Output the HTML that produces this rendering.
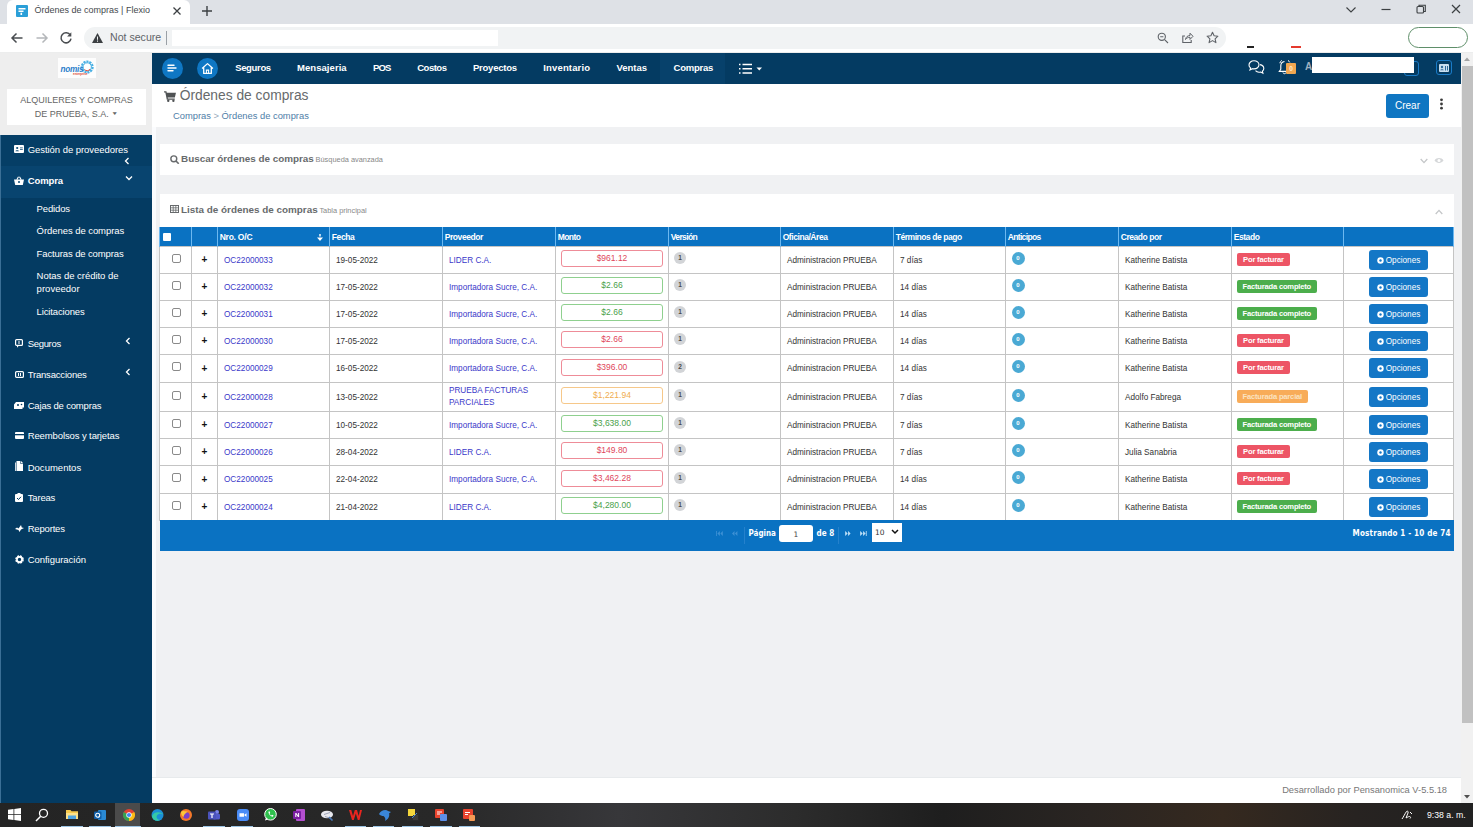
<!DOCTYPE html>
<html lang="es">
<head>
<meta charset="utf-8">
<title>Órdenes de compras | Flexio</title>
<style>
*{box-sizing:border-box;margin:0;padding:0}
html,body{width:1473px;height:827px;overflow:hidden;background:#f0f1f3;font-family:"Liberation Sans",sans-serif;}
body{position:relative}
.abs{position:absolute}
svg{display:block}
/* browser chrome */
#tabbar{position:absolute;left:0;top:0;width:1473px;height:24px;background:#dee1e6}
#tab{position:absolute;left:7px;top:0;width:183px;height:24px;background:#fff;border-radius:6px 6px 0 0}
#tab .t{position:absolute;left:27.500px;top:5px;font-size:9px;color:#45494d;white-space:nowrap}
#toolbar{position:absolute;left:0;top:24px;width:1473px;height:29px;background:#fff;border-bottom:1px solid #eceded;z-index:5}
#omni{position:absolute;left:84px;top:3px;width:1142px;height:22px;border-radius:11px;background:#f1f3f4}
#omni .ns{position:absolute;left:26px;top:4px;font-size:10.600px;color:#5f6368;white-space:nowrap}
/* app */
#side{position:absolute;left:0;top:52px;width:152px;height:751px;background:#043b62}
#sidetop{position:absolute;left:0;top:0;width:152px;height:83px;background:#eeeeee}
#company{position:absolute;left:7px;top:37px;width:139px;height:36px;background:#fff;text-align:center;font-size:9px;line-height:14px;color:#666;padding-top:4px}
#nav{position:absolute;left:152px;top:52px;width:1309px;height:32px;background:#043b62}
#nav .mi{position:absolute;top:10px;font-size:9.5px;font-weight:bold;color:#fff;white-space:nowrap}
.circ{position:absolute;top:6px;width:21px;height:21px;border-radius:50%;background:#0f77c4}
#head{position:absolute;left:152px;top:84px;width:1309px;height:43px;background:#fff}
#head h1{position:absolute;left:27.700px;top:4px;font-size:13.8px;font-weight:normal;color:#676a6c;white-space:nowrap}
#head .bc{position:absolute;left:21px;top:27px;font-size:9.35px;color:#4f7ea8;white-space:nowrap}
#crear{position:absolute;left:1386px;top:94px;width:43px;height:24px;background:#0f76c2;border-radius:3px;color:#fff;font-size:10px;text-align:center;line-height:23px}
.panel{position:absolute;left:160px;width:1294px;background:#fff}
.ptitle{position:absolute;font-size:9.900px;font-weight:bold;color:#676a6c;white-space:nowrap}
.ptitle small{font-size:7.400px;font-weight:normal;color:#888;margin-left:-1px}
#sidemenu .it{position:absolute;left:27.7px;font-size:9.5px;color:#fff;white-space:nowrap}
#sidemenu .sub{position:absolute;left:36.6px;font-size:9.5px;color:#fff;white-space:nowrap;line-height:12.5px}
#sidemenu svg{position:absolute;left:14px}
/* table */
#grid{position:absolute;left:159px;top:227px;width:1294px;border-collapse:collapse;table-layout:fixed;font-size:8.2px;color:#333}
#grid th{background:#0a72c2;color:#fff;font-size:8.5px;text-align:left;height:19px;padding:1px 0 0 1.7px;border-left:1px solid #6cb8f0;border-right:1px solid #6cb8f0;font-weight:bold;letter-spacing:-0.3px;white-space:nowrap}
#grid td{background:#fff;border:1px solid #c4c4c4;padding:1px 0 0 6px;vertical-align:middle;white-space:nowrap}

#grid td.c0{padding:0}
#grid td.c1{padding:0}
#grid td.cm{padding-left:5px}
#grid td.wrap{white-space:normal;line-height:12px}
#grid td a{color:#3b38c9;text-decoration:none}
.amt{display:block;width:102px;height:17px;margin:0 0 3px 0;border:1px solid;border-radius:3px;text-align:center;line-height:14px;font-size:8.5px;background:#fff}
.red{border-color:#ee8c98;color:#e0475c}
.grn{border-color:#8fd08f;color:#4aa14a}
.org{border-color:#f6c88a;color:#f0ad4e}
.ver{display:inline-block;width:12px;height:12px;border-radius:50%;background:#d2d4d7;color:#4a4a4a;font-size:6.5px;font-weight:bold;text-align:center;line-height:12px;margin:0 0 4px -1px}
.ant{display:inline-block;width:13px;height:13px;border-radius:50%;background:#4aa9d4;color:#fff;font-size:6px;font-weight:bold;text-align:center;line-height:13px;margin:0 0 4px -0.500px}
.lab{display:inline-block;height:13px;line-height:13px;padding:0 5.500px;border-radius:2px;color:#fff;font-size:7.600px;font-weight:bold;letter-spacing:-0.2px;margin-left:-1px;position:relative;top:-1px}
.lr{background:#ed5565;padding:0 6.100px}.lg{background:#4cae4c}.lo{background:#f8ac59;color:#fbe3c0}
.opc{display:block;width:59px;height:20px;margin:0 0 0 25px;background:#1477c6;border-radius:3px;color:#fff;font-size:8.200px;text-align:center;line-height:22.500px}
.opc .g{display:inline-block;vertical-align:-1px;margin-right:2px}
.cb{display:block;width:9px;height:9px;border:1px solid #8a8a8a;border-radius:2px;background:#fff;margin:0 0 3px 12px}
.plus{font-size:10px;font-weight:bold;color:#111;display:block;text-align:center;padding-right:0}
#pager{position:absolute;left:160px;top:520px;width:1294px;height:31px;background:#0a72c2;color:#fff;font-size:8px;font-weight:bold;font-family:"DejaVu Sans Condensed","DejaVu Sans",sans-serif}
#footer{position:absolute;left:152px;top:777px;width:1309px;height:26px;background:#fff;border-top:1px solid #e7eaec}
#footer span{position:absolute;right:14px;top:7px;font-size:9.300px;color:#777}
#scroll{position:absolute;left:1461px;top:52px;width:12px;height:751px;background:#f1f1f1}
#scroll i{position:absolute;left:1px;top:14px;width:11px;height:657px;background:#c1c1c1}
#taskbar{position:absolute;left:0;top:803px;width:1473px;height:24px;background:linear-gradient(90deg,#242424 0%,#282828 30%,#37373a 42%,#2c2c2c 54%,#1e1e1e 64%,#2a2522 74%,#35291f 83%,#272321 92%,#212121 100%)}
</style>
<style id="fitcss">
#n1{letter-spacing:-0.345px}
#n2{letter-spacing:0.057px}
#n3{letter-spacing:-0.754px}
#n4{letter-spacing:-0.484px}
#n5{letter-spacing:-0.215px}
#n6{letter-spacing:0.149px}
#n7{letter-spacing:-0.007px}
#n8{letter-spacing:-0.227px}
#h1{letter-spacing:-0.235px}
#h2{letter-spacing:-0.356px}
#h3{letter-spacing:-0.416px}
#h4{letter-spacing:-0.580px}
#h5{letter-spacing:-0.616px}
#h6{letter-spacing:-0.440px}
#h7{letter-spacing:-0.450px}
#h8{letter-spacing:-0.648px}
#h9{letter-spacing:-0.444px}
#h10{letter-spacing:-0.441px}
#s1{letter-spacing:-0.050px}
#s2{letter-spacing:-0.101px}
#s3{letter-spacing:-0.149px}
#s4{letter-spacing:-0.062px}
#s5{letter-spacing:-0.118px}
#s15{letter-spacing:-0.026px}
#s16{letter-spacing:0.024px}
#s6{letter-spacing:-0.137px}
#s7{letter-spacing:-0.313px}
#s8{letter-spacing:-0.188px}
#s9{letter-spacing:-0.185px}
#s10{letter-spacing:-0.109px}
#s11{letter-spacing:0.016px}
#s12{letter-spacing:-0.169px}
#s13{letter-spacing:-0.183px}
#s14{letter-spacing:-0.033px}
#p1{letter-spacing:-0.019px}
#p2{letter-spacing:0.038px}
#p3{letter-spacing:0.180px}
</style>
</head>
<body>
<div id="tabbar">
  <div id="tab">
    <svg class="abs" style="left:9px;top:5px" width="12" height="12" viewBox="0 0 12 12"><rect width="12" height="12" rx="1" fill="#2a9fd8"/><path d="M2.5 3h7v1.6h-7zM2.5 5.6h5v1.4h-5zM4.5 7.8h1.6v2.2h-1.6z" fill="#fff"/></svg>
    <span class="t">Órdenes de compras | Flexio</span>
    <svg class="abs" style="left:165px;top:6px" width="10" height="10" viewBox="0 0 10 10"><path d="M1.5 1.5l7 7M8.5 1.5l-7 7" stroke="#3c4043" stroke-width="1.3" fill="none"/></svg>
  </div>
  <svg class="abs" style="left:201px;top:5px" width="12" height="12" viewBox="0 0 12 12"><path d="M6 1v10M1 6h10" stroke="#3c4043" stroke-width="1.4" fill="none"/></svg>
  <svg class="abs" style="left:1345px;top:5px" width="12" height="10" viewBox="0 0 12 10"><path d="M1.5 2.5l4.5 4.5 4.5-4.5" stroke="#3c4043" stroke-width="1.1" fill="none"/></svg>
  <svg class="abs" style="left:1380px;top:4px" width="12" height="12" viewBox="0 0 12 12"><path d="M1.5 5.5h9" stroke="#3c4043" stroke-width="1.2"/></svg>
  <svg class="abs" style="left:1415px;top:3px" width="12" height="12" viewBox="0 0 12 12"><rect x="2" y="3.5" width="6.5" height="6.5" rx="1" stroke="#3c4043" stroke-width="1.1" fill="none"/><path d="M4 3.5v-1.3h6.3v6.3h-1.6" stroke="#3c4043" stroke-width="1.1" fill="none"/></svg>
  <svg class="abs" style="left:1450px;top:3px" width="12" height="12" viewBox="0 0 12 12"><path d="M2 2l8 8M10 2l-8 8" stroke="#3c4043" stroke-width="1.2" fill="none"/></svg>
</div>
<div id="toolbar">
  <svg class="abs" style="left:10px;top:7px" width="14" height="14" viewBox="0 0 14 14"><path d="M12.5 7h-10M6.5 2.5l-4.5 4.5 4.5 4.5" stroke="#4a4d51" stroke-width="1.5" fill="none"/></svg>
  <svg class="abs" style="left:35px;top:7px" width="14" height="14" viewBox="0 0 14 14"><path d="M1.5 7h10M7.5 2.5l4.5 4.5-4.5 4.5" stroke="#b4b7ba" stroke-width="1.5" fill="none"/></svg>
  <svg class="abs" style="left:59px;top:7px" width="14" height="14" viewBox="0 0 14 14"><path d="M11.3 4.2A5 5 0 1 0 12 7.6" stroke="#4a4d51" stroke-width="1.5" fill="none"/><path d="M12.3 1.3v4.2h-4.2z" fill="#4a4d51"/></svg>
  <div id="omni">
    <svg class="abs" style="left:8px;top:6px" width="11" height="10" viewBox="0 0 11 10"><path d="M5.5 0L11 10H0z" fill="#3c4043"/><path d="M5 3.6h1v3.2h-1zM5 7.6h1v1.1h-1z" fill="#f1f3f4"/></svg>
    <span class="ns">Not secure</span>
    <span class="abs" style="left:82px;top:4px;width:1px;height:14px;background:#9aa0a6"></span>
    <span class="abs" style="left:88px;top:3px;width:326px;height:16px;background:#fff"></span>
    <svg class="abs" style="left:1073px;top:5px" width="12" height="12" viewBox="0 0 12 12"><circle cx="4.8" cy="4.8" r="3.6" stroke="#5f6368" stroke-width="1.1" fill="none"/><path d="M7.6 7.6l3.4 3.4M3.2 4.8h3.2" stroke="#5f6368" stroke-width="1.1"/></svg>
    <svg class="abs" style="left:1097px;top:4px" width="13" height="13" viewBox="0 0 13 13"><path d="M4 5H1.8v6.5h8.4V9" stroke="#5f6368" stroke-width="1.1" fill="none"/><path d="M4.5 8.5c.4-2.6 2-3.8 4.5-4V2.2l3 3.1-3 3.1V6.3C7 6.300 5.500 7 4.500 8.500z" stroke="#5f6368" stroke-width="1" fill="none"/></svg>
    <svg class="abs" style="left:1122px;top:4px" width="13" height="13" viewBox="0 0 13 13"><path d="M6.5 1.3l1.6 3.5 3.8.4-2.800 2.600.8 3.800-3.400-2-3.400 2 .8-3.800L1.100 5.200l3.800-.4z" stroke="#5f6368" stroke-width="1.1" fill="none" stroke-linejoin="round"/></svg>
  </div>
  <span class="abs" style="left:1247px;top:22px;width:7px;height:2px;background:#222"></span>
  <span class="abs" style="left:1291px;top:22px;width:10px;height:2px;background:#e53a2e"></span>
  <span class="abs" style="left:1408px;top:3px;width:60px;height:21px;border:1px solid #5f8f6a;border-radius:11px;background:#fff"></span>
</div>

<div id="side">
  <div id="sidetop">
    <div class="abs" style="left:57.500px;top:6px;width:38px;height:20px;background:#fdfdfd"></div>
    <svg class="abs" style="left:57.500px;top:6px" width="38" height="20" viewBox="0 0 38 20"><circle cx="29.200" cy="9" r="5.400" stroke="#49b0e4" stroke-width="2.200" fill="none" stroke-dasharray="2.100 .9"/><circle cx="29.200" cy="9" r="4.200" stroke="#49b0e4" stroke-width="1" fill="#fff"/><path d="M26.500 11.500a3.600 3.600 0 0 0 5.600-.4" stroke="#e8523f" stroke-width="1" fill="none"/><rect x="2" y="6" width="24" height="7.500" fill="#fdfdfd" opacity=".0"/><text x="2.600" y="13.500" font-family="Liberation Sans, sans-serif" font-size="8.200" font-weight="bold" font-style="italic" fill="#2c7fcb" letter-spacing="-.3">nomis</text><text x="15" y="17" font-family="Liberation Sans, sans-serif" font-size="3" font-weight="bold" fill="#e0452f">enterprise</text></svg>
    <div id="company">ALQUILERES Y COMPRAS<br>DE PRUEBA, S.A. <span style="font-size:7px;vertical-align:1px;display:inline-block;transform:scaleY(.7)">▼</span></div>
  </div>
  <div class="abs" style="left:0;top:83px;width:152px;height:31px;background:#053e66"></div>
  <div class="abs" style="left:0;top:114px;width:152px;height:32px;background:#08446f"></div>
  <div class="abs" style="left:0;top:83px;width:1px;height:668px;background:#3b6f96"></div>
  <div id="sidemenu">
    <svg style="top:93px" width="10" height="8" viewBox="0 0 10 8"><rect width="10" height="8" rx="1" fill="#fff"/><circle cx="3.200" cy="3" r="1.1" fill="#0a4873"/><path d="M1.500 6.200c0-1.400 3.400-1.400 3.400 0zM6 2.500h2.800v.8H6zM6 4.300h2.800v.8H6z" fill="#0a4873"/></svg>
    <span class="it" id="s1" style="top:92px">Gestión de proveedores</span>
    <svg style="left:124px;top:105px" width="6" height="8" viewBox="0 0 6 8"><path d="M4.500 1L1.500 4l3 3" stroke="#fff" stroke-width="1.3" fill="none"/></svg>
    <svg style="top:124px" width="10" height="9" viewBox="0 0 10 9"><path d="M0 3.500h10l-1.200 5.500H1.200z" fill="#fff"/><path d="M2.800 3.800L4.500.8M7.200 3.800L5.500.8" stroke="#fff" stroke-width="1.100" fill="none"/><circle cx="5" cy="6" r="1" fill="#0a4873"/></svg>
    <span class="it" id="s2" style="top:123px;font-weight:bold">Compra</span>
    <svg style="left:125px;top:123px" width="8" height="6" viewBox="0 0 8 6"><path d="M1 1.500l3 3 3-3" stroke="#fff" stroke-width="1.300" fill="none"/></svg>
    <span class="sub" id="s3" style="top:151px">Pedidos</span>
    <span class="sub" id="s4" style="top:173px">Órdenes de compras</span>
    <span class="sub" id="s5" style="top:196px">Facturas de compras</span>
    <span class="sub" style="top:218px"><span id="s15">Notas de crédito de</span><br><span id="s16">proveedor</span></span>
    <span class="sub" id="s6" style="top:254px">Licitaciones</span>
    <svg style="left:15px;top:287px" width="8" height="9" viewBox="0 0 8 9"><rect x=".6" y=".6" width="6.800" height="5.800" rx="1" stroke="#fff" stroke-width="1.200" fill="none"/><path d="M2 6.500v2.200l2-2.200zM3.500 2h1v3h-1z" fill="#fff"/></svg>
    <span class="it" id="s7" style="top:286px">Seguros</span>
    <svg style="left:125px;top:285px" width="6" height="8" viewBox="0 0 6 8"><path d="M4.500 1L1.500 4l3 3" stroke="#fff" stroke-width="1.300" fill="none"/></svg>
    <svg style="left:15px;top:319px" width="9" height="7" viewBox="0 0 9 7"><rect x=".6" y=".6" width="7.800" height="5.800" rx="1" stroke="#fff" stroke-width="1.200" fill="none"/><path d="M3 2h1v3H3zM5 2h1v3H5z" fill="#fff"/></svg>
    <span class="it" id="s8" style="top:317px">Transacciones</span>
    <svg style="left:125px;top:316px" width="6" height="8" viewBox="0 0 6 8"><path d="M4.500 1L1.500 4l3 3" stroke="#fff" stroke-width="1.300" fill="none"/></svg>
    <svg style="top:350px" width="10" height="7" viewBox="0 0 10 7"><path d="M2 0h8v5.500H8.500V7H0V2.500z" fill="#fff"/><circle cx="4" cy="3" r="1" fill="#043b62"/><circle cx="7.500" cy="2.500" r=".8" fill="#043b62"/></svg>
    <span class="it" id="s9" style="top:348px">Cajas de compras</span>
    <svg style="left:15px;top:380px" width="9" height="7" viewBox="0 0 9 7"><rect width="9" height="7" rx="1" fill="#fff"/><path d="M0 2h9v1.300H0z" fill="#043b62"/></svg>
    <span class="it" id="s10" style="top:378px">Reembolsos y tarjetas</span>
    <svg style="left:15px;top:409px" width="8" height="10" viewBox="0 0 8 10"><path d="M1.500 0H6l2 2v8H1.500z" fill="#fff"/><path d="M0 1.500h1v8.500H0z" fill="#cfd9e2"/><path d="M5.500 0v2.500H8" stroke="#043b62" stroke-width=".6" fill="none"/></svg>
    <span class="it" id="s11" style="top:409.500px">Documentos</span>
    <svg style="left:15px;top:441px" width="8" height="9" viewBox="0 0 8 9"><rect y="1" width="8" height="8" rx="1" fill="#fff"/><rect x="2.500" width="3" height="2" fill="#fff"/><path d="M2 5l1.500 1.500L6 3.800" stroke="#043b62" stroke-width="1" fill="none"/></svg>
    <span class="it" id="s12" style="top:440px">Tareas</span>
    <svg style="left:15px;top:473px" width="9" height="7" viewBox="0 0 9 7"><path d="M0 4l2-1.500 1.500 1L6 0l.8 2.500L9 3 6 4.500 4.500 7l-1-2z" fill="#fff"/></svg>
    <span class="it" id="s13" style="top:471px">Reportes</span>
    <svg style="left:15px;top:503px" width="9" height="9" viewBox="0 0 9 9"><circle cx="4.500" cy="4.500" r="3" fill="none" stroke="#fff" stroke-width="2.600" stroke-dasharray="1.600 .76"/><circle cx="4.500" cy="4.500" r="2.600" fill="none" stroke="#fff" stroke-width="1.600"/></svg>
    <span class="it" id="s14" style="top:502px">Configuración</span>
  </div>
</div>

<div id="nav">
  <div class="abs" style="left:508px;top:0;width:65px;height:32px;background:#07416b"></div>
  <div class="circ" style="left:10px"><svg class="abs" style="left:5px;top:5px" width="10" height="10" viewBox="0 0 10 10"><path d="M1 2.200h6M1 5h8M1 7.800h5" stroke="#fff" stroke-width="1.400" stroke-linecap="round"/></svg></div>
  <div class="circ" style="left:45px"><svg class="abs" style="left:4px;top:4px" width="13" height="13" viewBox="0 0 12 12"><path d="M1 6l5-4.500L11 6M2.500 5v5.500h7V5" stroke="#fff" stroke-width="1.200" fill="none" stroke-linejoin="round"/><path d="M5 10.500V7.500h2v3" stroke="#fff" stroke-width="1" fill="none"/></svg></div>
  <span class="mi" id="n1" style="left:83.2px">Seguros</span>
  <span class="mi" id="n2" style="left:145.0px">Mensajeria</span>
  <span class="mi" id="n3" style="left:220.9px">POS</span>
  <span class="mi" id="n4" style="left:265.2px">Costos</span>
  <span class="mi" id="n5" style="left:320.9px">Proyectos</span>
  <span class="mi" id="n6" style="left:391.3px">Inventario</span>
  <span class="mi" id="n7" style="left:464.4px">Ventas</span>
  <span class="mi" id="n8" style="left:521.5px">Compras</span>
  <svg class="abs" style="left:587px;top:11px" width="24" height="12" viewBox="0 0 24 12"><path d="M0 1.600h1.500M3.500 1.600h9.500M0 5.800h1.500M3.500 5.800h9.500M0 10h1.500M3.500 10h9.500" stroke="#fff" stroke-width="1.500"/><path d="M17.500 4.500h5.500l-2.750 3z" fill="#fff"/></svg>
  <svg class="abs" style="left:1096px;top:8px" width="17" height="15" viewBox="0 0 17 15"><path d="M6 .8c-2.800 0-5 1.800-5 4.100 0 1.200.6 2.300 1.600 3L2 10l2.400-1.300c.5.100 1 .2 1.600.2 2.800 0 5-1.800 5-4.100S8.800.8 6 .8z" stroke="#fff" stroke-width="1.100" fill="none"/><path d="M12 4.600c2 .4 3.800 1.800 3.800 3.800 0 1-.5 2-1.400 2.700l.5 2.100-2.200-1.200c-1.800.5-4 0-5.200-1.300" stroke="#fff" stroke-width="1.100" fill="none"/></svg>
  <svg class="abs" style="left:1126px;top:7px" width="14" height="16" viewBox="0 0 14 16"><path d="M6.500 2.500c-2.400.3-3.700 2-3.700 4.300v3.400L1.300 12.400h10.400" stroke="#fff" stroke-width="1.100" fill="none"/><path d="M1.800 4.200C2 3 2.800 2 3.800 1.400M10 1.400c.8.500 1.400 1.200 1.800 2" stroke="#fff" stroke-width="1" fill="none"/><path d="M5 13.500c.3 1.600 2.700 1.600 3 0" stroke="#fff" stroke-width="1" fill="none"/></svg>
  <span class="abs" style="left:1134px;top:11px;width:10px;height:11px;background:#f1a751;border-radius:1px;color:#fde9cf;font-size:6.500px;font-weight:bold;text-align:center;line-height:11px">0</span>
  <span class="abs" style="left:1153px;top:9px;color:#9fb0c0;font-size:10px;font-weight:bold">A</span>
  <span class="abs" style="left:1252px;top:9px;width:15px;height:15px;border:1.500px solid #1a7bc7;border-radius:3px"></span>
  <span class="abs" style="left:1160px;top:5px;width:102px;height:16px;background:#fff"></span>
  <span class="abs" style="left:1284px;top:8px;width:16px;height:15px;border:1.500px solid #1a7bc7;border-radius:3px"></span>
  <svg class="abs" style="left:1287px;top:12px" width="10" height="8" viewBox="0 0 10 8"><rect width="10" height="8" rx="1" fill="#c9dff0"/><circle cx="3" cy="3" r="1.200" fill="#2d6a9a"/><path d="M1.200 6.300c0-1.500 3.600-1.500 3.600 0zM6 2h1v4.500H6zM8 2h1v4.500H8z" fill="#2d6a9a"/></svg>
</div>

<div class="abs" style="left:152px;top:127px;width:3.500px;height:650px;background:#fbfcfe"></div>
<div id="head">
  <svg class="abs" style="left:11.500px;top:6.500px" width="12" height="11" viewBox="0 0 13 12"><path d="M0 .3h2.600l.4 1.500H13l-1.200 5.400H4l.2 1h7.500v1.300H3L1.400 1.600H0z" fill="#4f5254"/><circle cx="4.600" cy="10.700" r="1.300" fill="#4f5254"/><circle cx="10.200" cy="10.700" r="1.300" fill="#4f5254"/></svg>
  <h1>Órdenes de compras</h1>
  <div class="bc">Compras <span style="color:#9ab">&gt;</span> Órdenes de compras</div>
</div>
<div id="crear">Crear</div>
<svg class="abs" style="left:1439px;top:98px" width="5" height="12" viewBox="0 0 5 12"><circle cx="2.500" cy="1.800" r="1.400" fill="#3a3a3a"/><circle cx="2.500" cy="6" r="1.400" fill="#3a3a3a"/><circle cx="2.500" cy="10.200" r="1.400" fill="#3a3a3a"/></svg>

<div class="panel" style="top:144px;height:31px">
  <svg class="abs" style="left:10px;top:10.500px" width="9.500" height="9.500" viewBox="0 0 10 10"><circle cx="4" cy="4" r="3.100" stroke="#676a6c" stroke-width="1.500" fill="none"/><path d="M6.300 6.300l2.900 2.900" stroke="#676a6c" stroke-width="1.700"/></svg>
  <span class="ptitle" style="left:21px;top:9px">Buscar órdenes de compras <small>Búsqueda avanzada</small></span>
  <svg class="abs" style="left:1260px;top:14px" width="8" height="6" viewBox="0 0 8 6"><path d="M.700 1l3.300 3.600L7.300 1" stroke="#c4c6c8" stroke-width="1.300" fill="none"/></svg>
  <svg class="abs" style="left:1274px;top:13px" width="10" height="7" viewBox="0 0 10 7"><path d="M.5 3.500C2.500.300 7.500.300 9.500 3.500 7.500 6.700 2.500 6.700.5 3.500z" fill="#d5d7d9"/><circle cx="5" cy="3.500" r="1.500" fill="#fff"/></svg>
</div>
<div class="panel" style="top:194px;height:34px">
  <svg class="abs" style="left:10px;top:11px" width="9" height="8" viewBox="0 0 9 8"><rect x=".5" y=".5" width="8" height="7" fill="none" stroke="#676a6c" stroke-width="1"/><path d="M.5 2.800h8M.5 5.200h8M3.200.5v7M5.800.5v7" stroke="#676a6c" stroke-width=".8"/></svg>
  <span class="ptitle" style="left:21px;top:10px">Lista de órdenes de compras <small>Tabla principal</small></span>
  <svg class="abs" style="left:1275px;top:15px" width="8" height="6" viewBox="0 0 8 6"><path d="M.700 5l3.300-3.600L7.300 5" stroke="#c4c6c8" stroke-width="1.300" fill="none"/></svg>
</div>

<table id="grid">
<colgroup><col style="width:32px"><col style="width:26px"><col style="width:112px"><col style="width:113px"><col style="width:113px"><col style="width:113px"><col style="width:112px"><col style="width:113px"><col style="width:112px"><col style="width:113px"><col style="width:113px"><col style="width:112px"><col style="width:110px"></colgroup>
<tr><th><i style="display:block;width:8px;height:8px;background:#fff;border-radius:1px;margin-left:1px"></i></th><th></th><th><span id="h1">Nro. O/C</span><svg style="float:right;margin:2px 6px 0 0" width="6" height="8" viewBox="0 0 6 8"><path d="M2.300 0h1.400v2.500H2.300zM0 3.500h6L3 7z" fill="#fff"/></svg></th><th><span id="h2">Fecha</span></th><th><span id="h3">Proveedor</span></th><th><span id="h4">Monto</span></th><th><span id="h5">Versión</span></th><th><span id="h6">Oficina/Área</span></th><th><span id="h7">Términos de pago</span></th><th><span id="h8">Anticipos</span></th><th><span id="h9">Creado por</span></th><th><span id="h10">Estado</span></th><th></th></tr>
<tr style="height:27px"><td class="c0"><i class="cb"></i></td><td class="c1"><span class="plus">+</span></td><td><a>OC22000033</a></td><td>19-05-2022</td><td><a>LIDER C.A.</a></td><td class="cm"><span class="amt red">$961.12</span></td><td><span class="ver">1</span></td><td>Administracion PRUEBA</td><td>7 días</td><td><span class="ant">0</span></td><td>Katherine Batista</td><td><span class="lab lr">Por facturar</span></td><td class="c0"><span class="opc"><svg class="g" width="7" height="7" viewBox="0 0 10 10"><circle cx="5" cy="5" r="4.6" fill="#fff"/><circle cx="5" cy="5" r="1.7" fill="#1477c6"/></svg>Opciones</span></td></tr>
<tr style="height:27px"><td class="c0"><i class="cb"></i></td><td class="c1"><span class="plus">+</span></td><td><a>OC22000032</a></td><td>17-05-2022</td><td><a>Importadora Sucre, C.A.</a></td><td class="cm"><span class="amt grn">$2.66</span></td><td><span class="ver">1</span></td><td>Administracion PRUEBA</td><td>14 días</td><td><span class="ant">0</span></td><td>Katherine Batista</td><td><span class="lab lg">Facturada completo</span></td><td class="c0"><span class="opc"><svg class="g" width="7" height="7" viewBox="0 0 10 10"><circle cx="5" cy="5" r="4.6" fill="#fff"/><circle cx="5" cy="5" r="1.7" fill="#1477c6"/></svg>Opciones</span></td></tr>
<tr style="height:27px"><td class="c0"><i class="cb"></i></td><td class="c1"><span class="plus">+</span></td><td><a>OC22000031</a></td><td>17-05-2022</td><td><a>Importadora Sucre, C.A.</a></td><td class="cm"><span class="amt grn">$2.66</span></td><td><span class="ver">1</span></td><td>Administracion PRUEBA</td><td>14 días</td><td><span class="ant">0</span></td><td>Katherine Batista</td><td><span class="lab lg">Facturada completo</span></td><td class="c0"><span class="opc"><svg class="g" width="7" height="7" viewBox="0 0 10 10"><circle cx="5" cy="5" r="4.6" fill="#fff"/><circle cx="5" cy="5" r="1.7" fill="#1477c6"/></svg>Opciones</span></td></tr>
<tr style="height:27px"><td class="c0"><i class="cb"></i></td><td class="c1"><span class="plus">+</span></td><td><a>OC22000030</a></td><td>17-05-2022</td><td><a>Importadora Sucre, C.A.</a></td><td class="cm"><span class="amt red">$2.66</span></td><td><span class="ver">1</span></td><td>Administracion PRUEBA</td><td>14 días</td><td><span class="ant">0</span></td><td>Katherine Batista</td><td><span class="lab lr">Por facturar</span></td><td class="c0"><span class="opc"><svg class="g" width="7" height="7" viewBox="0 0 10 10"><circle cx="5" cy="5" r="4.6" fill="#fff"/><circle cx="5" cy="5" r="1.7" fill="#1477c6"/></svg>Opciones</span></td></tr>
<tr style="height:28px"><td class="c0"><i class="cb"></i></td><td class="c1"><span class="plus">+</span></td><td><a>OC22000029</a></td><td>16-05-2022</td><td><a>Importadora Sucre, C.A.</a></td><td class="cm"><span class="amt red">$396.00</span></td><td><span class="ver">2</span></td><td>Administracion PRUEBA</td><td>14 días</td><td><span class="ant">0</span></td><td>Katherine Batista</td><td><span class="lab lr">Por facturar</span></td><td class="c0"><span class="opc"><svg class="g" width="7" height="7" viewBox="0 0 10 10"><circle cx="5" cy="5" r="4.6" fill="#fff"/><circle cx="5" cy="5" r="1.7" fill="#1477c6"/></svg>Opciones</span></td></tr>
<tr class="tall" style="height:29px"><td class="c0"><i class="cb"></i></td><td class="c1"><span class="plus">+</span></td><td><a>OC22000028</a></td><td>13-05-2022</td><td class="wrap"><a>PRUEBA FACTURAS PARCIALES</a></td><td class="cm"><span class="amt org">$1,221.94</span></td><td><span class="ver">1</span></td><td>Administracion PRUEBA</td><td>7 días</td><td><span class="ant">0</span></td><td>Adolfo Fabrega</td><td><span class="lab lo">Facturada parcial</span></td><td class="c0"><span class="opc"><svg class="g" width="7" height="7" viewBox="0 0 10 10"><circle cx="5" cy="5" r="4.6" fill="#fff"/><circle cx="5" cy="5" r="1.7" fill="#1477c6"/></svg>Opciones</span></td></tr>
<tr style="height:27px"><td class="c0"><i class="cb"></i></td><td class="c1"><span class="plus">+</span></td><td><a>OC22000027</a></td><td>10-05-2022</td><td><a>Importadora Sucre, C.A.</a></td><td class="cm"><span class="amt grn">$3,638.00</span></td><td><span class="ver">1</span></td><td>Administracion PRUEBA</td><td>7 días</td><td><span class="ant">0</span></td><td>Katherine Batista</td><td><span class="lab lg">Facturada completo</span></td><td class="c0"><span class="opc"><svg class="g" width="7" height="7" viewBox="0 0 10 10"><circle cx="5" cy="5" r="4.6" fill="#fff"/><circle cx="5" cy="5" r="1.7" fill="#1477c6"/></svg>Opciones</span></td></tr>
<tr style="height:27px"><td class="c0"><i class="cb"></i></td><td class="c1"><span class="plus">+</span></td><td><a>OC22000026</a></td><td>28-04-2022</td><td><a>LIDER C.A.</a></td><td class="cm"><span class="amt red">$149.80</span></td><td><span class="ver">1</span></td><td>Administracion PRUEBA</td><td>7 días</td><td><span class="ant">0</span></td><td>Julia Sanabria</td><td><span class="lab lr">Por facturar</span></td><td class="c0"><span class="opc"><svg class="g" width="7" height="7" viewBox="0 0 10 10"><circle cx="5" cy="5" r="4.6" fill="#fff"/><circle cx="5" cy="5" r="1.7" fill="#1477c6"/></svg>Opciones</span></td></tr>
<tr style="height:28px"><td class="c0"><i class="cb"></i></td><td class="c1"><span class="plus">+</span></td><td><a>OC22000025</a></td><td>22-04-2022</td><td><a>Importadora Sucre, C.A.</a></td><td class="cm"><span class="amt red">$3,462.28</span></td><td><span class="ver">1</span></td><td>Administracion PRUEBA</td><td>14 días</td><td><span class="ant">0</span></td><td>Katherine Batista</td><td><span class="lab lr">Por facturar</span></td><td class="c0"><span class="opc"><svg class="g" width="7" height="7" viewBox="0 0 10 10"><circle cx="5" cy="5" r="4.6" fill="#fff"/><circle cx="5" cy="5" r="1.7" fill="#1477c6"/></svg>Opciones</span></td></tr>
<tr style="height:27px"><td class="c0"><i class="cb"></i></td><td class="c1"><span class="plus">+</span></td><td><a>OC22000024</a></td><td>21-04-2022</td><td><a>LIDER C.A.</a></td><td class="cm"><span class="amt grn">$4,280.00</span></td><td><span class="ver">1</span></td><td>Administracion PRUEBA</td><td>14 días</td><td><span class="ant">0</span></td><td>Katherine Batista</td><td><span class="lab lg">Facturada completo</span></td><td class="c0"><span class="opc"><svg class="g" width="7" height="7" viewBox="0 0 10 10"><circle cx="5" cy="5" r="4.6" fill="#fff"/><circle cx="5" cy="5" r="1.7" fill="#1477c6"/></svg>Opciones</span></td></tr>
</table>

<div id="pager">
  <span class="abs" style="left:584px;top:7px;width:1px;height:17px;background:#2581cc"></span>
  <svg class="abs" style="left:556px;top:11px" width="7" height="5" viewBox="0 0 8 6"><path d="M0 0h1v6H0zM4.500 0v6L1.500 3zM8 0v6L5 3z" fill="#3d90d4"/></svg>
  <svg class="abs" style="left:571px;top:11px" width="7" height="5" viewBox="0 0 8 6"><path d="M4 0v6L1 3zM7.500 0v6L4.500 3z" fill="#3d90d4"/></svg>
  <span class="abs" id="p1" style="left:588.500px;top:8.500px">Página</span>
  <span class="abs" style="left:619px;top:5px;width:34px;height:17px;background:#fff;border-radius:3px;color:#444;font-weight:normal;text-align:center;line-height:19px;font-size:7.500px;font-family:'DejaVu Sans',sans-serif">1</span>
  <span class="abs" id="p2" style="left:656.500px;top:8.500px">de 8</span>
  <span class="abs" style="left:678px;top:7px;width:1px;height:17px;background:#2581cc"></span>
  <svg class="abs" style="left:685px;top:11px" width="7" height="5" viewBox="0 0 8 6"><path d="M0 0v6l3-3zM3.500 0v6l3-3z" fill="#bfe0f7"/></svg>
  <svg class="abs" style="left:700px;top:11px" width="7" height="5" viewBox="0 0 8 6"><path d="M0 0v6l3-3zM3.500 0v6l3-3zM6.800 0h1v6h-1z" fill="#bfe0f7"/></svg>
  <span class="abs" style="left:712px;top:3px;width:30px;height:19px;background:#fff;color:#333;font-weight:normal;line-height:20px;font-size:7.500px;padding-left:3px;font-family:'DejaVu Sans',sans-serif">10<svg class="abs" style="left:19px;top:6px" width="8" height="6" viewBox="0 0 8 6"><path d="M1 1l3 3 3-3" stroke="#111" stroke-width="1.500" fill="none"/></svg></span>
  <span class="abs" id="p3" style="left:1192.600px;top:8.500px;white-space:nowrap">Mostrando 1 - 10 de 74</span>
</div>

<div id="footer"><span>Desarrollado por Pensanomica V-5.5.18</span></div>
<div id="scroll"><i></i>
  <svg class="abs" style="left:3px;top:5px" width="6" height="4" viewBox="0 0 6 4"><path d="M0 4l3-3.500L6 4z" fill="#a3a3a3"/></svg>
  <svg class="abs" style="left:3px;top:743px" width="6" height="4" viewBox="0 0 6 4"><path d="M0 0l3 3.500L6 0z" fill="#505050"/></svg>
</div>
<div id="taskbar">
  <span class="abs" style="left:115px;top:0;width:25px;height:24px;background:#4b4b4b"></span>
  <svg class="abs" style="left:8px;top:5px" width="13" height="13" viewBox="0 0 13 13"><path d="M0 1.800l5.500-.8v5.200H0zM6.300.900L13 0v6.200H6.300zM0 6.900h5.500v5.200L0 11.300zM6.300 6.900H13V13l-6.700-.9z" fill="#fff"/></svg>
  <svg class="abs" style="left:35px;top:5px" width="14" height="14" viewBox="0 0 14 14"><circle cx="8.500" cy="5.300" r="4" stroke="#fff" stroke-width="1.300" fill="none"/><path d="M5.700 8.300L1 13" stroke="#fff" stroke-width="1.500"/></svg>
  <svg class="abs" style="left:66px;top:6px" width="12" height="11" viewBox="0 0 12 11"><path d="M0 1h4.500l1 1.200H12V10H0z" fill="#f5c84c"/><path d="M0 4h12v6H0z" fill="#fbe08a"/><path d="M2 6.500h8V10H2z" fill="#4fa3e0"/></svg>
  <svg class="abs" style="left:94px;top:6px" width="12" height="12" viewBox="0 0 12 12"><rect x="4" y="1" width="8" height="10" rx="1" fill="#2a8ad4"/><rect y="2.500" width="7.500" height="7.500" rx="1" fill="#0f5ea8"/><circle cx="3.700" cy="6.200" r="2" stroke="#fff" stroke-width="1.100" fill="none"/></svg>
  <svg class="abs" style="left:123px;top:6px" width="12" height="12" viewBox="0 0 12 12"><circle cx="6" cy="6" r="6" fill="#e34133"/><path d="M6 6L.8 3A6 6 0 0 0 6 12z" fill="#34a353"/><path d="M6 6v6A6 6 0 0 0 11.200 3z" fill="#f9bc15"/><circle cx="6" cy="6" r="2.700" fill="#fff"/><circle cx="6" cy="6" r="2.100" fill="#4285f4"/></svg>
  <svg class="abs" style="left:151px;top:6px" width="13" height="12" viewBox="0 0 13 12"><circle cx="6.500" cy="6" r="6" fill="#1b8fd6"/><path d="M1 7.500C2 2 11 2 12.300 6c-1-1.500-5-2-6.300.5s1 4.500 3.500 4.300C6 13 1.500 11 1 7.500z" fill="#35c9a5"/></svg>
  <svg class="abs" style="left:180px;top:6px" width="12" height="12" viewBox="0 0 12 12"><circle cx="6" cy="6" r="6" fill="#f5782a"/><circle cx="6.300" cy="6.500" r="3.300" fill="#7c3fc9"/><path d="M1 3C3 1 5 3 8 2.500 6 4 4 5 3.500 8 2 7 1 5 1 3z" fill="#fdc53a"/></svg>
  <svg class="abs" style="left:208px;top:6px" width="12" height="12" viewBox="0 0 12 12"><circle cx="9" cy="3" r="2" fill="#7b83eb"/><rect x="5" y="4.500" width="7" height="6" rx="1.500" fill="#5059c9"/><rect y="2.500" width="8" height="8" rx="1" fill="#4b53bc"/><path d="M2 4.500h4v1H4.600v3.500H3.400V5.500H2z" fill="#fff"/></svg>
  <svg class="abs" style="left:237px;top:6px" width="12" height="12" viewBox="0 0 12 12"><rect width="12" height="12" rx="3" fill="#4a8cf7"/><path d="M2.500 4.200h4.500v3.600H2.500zM7.500 5.500l2-1.300v3.600l-2-1.300z" fill="#fff"/></svg>
  <svg class="abs" style="left:264px;top:5px" width="13" height="13" viewBox="0 0 13 13"><circle cx="6.500" cy="6.300" r="5.800" fill="#2fc14d" stroke="#fff" stroke-width="1"/><path d="M1 12.500l1-3 2 2z" fill="#fff"/><path d="M4.300 3.800c.5 3 2.200 4.600 4.500 5l.8-1.200-1.600-.8-.6.600C6.400 7 5.800 6.200 5.600 5.400l.6-.5-.6-1.700z" fill="#fff"/></svg>
  <svg class="abs" style="left:293px;top:6px" width="12" height="12" viewBox="0 0 12 12"><rect x="3" width="9" height="12" rx="1" fill="#b54fd0"/><rect y="2" width="8" height="8" rx="1" fill="#7a1fa2"/><path d="M2.300 8V4h1l1.800 2.500V4h1v4H5L3.300 5.600V8z" fill="#fff"/></svg>
  <svg class="abs" style="left:321px;top:7px" width="13" height="11" viewBox="0 0 13 11"><ellipse cx="6" cy="4.500" rx="6" ry="3.800" fill="#e8e8ee"/><path d="M3 4.500l6-2M4 6.500l6 2" stroke="#8a90a8" stroke-width=".8"/><path d="M8 7l3.500 3.500" stroke="#4a78b8" stroke-width="1.600"/></svg>
  <svg class="abs" style="left:349px;top:7px" width="13" height="10" viewBox="0 0 13 10"><path d="M0 0h2.300l1.700 6 1.800-6H8L9.700 6 11 0h2l-2.500 10H8.800L6.800 3.500 4.800 10H3z" fill="#e8251f"/></svg>
  <svg class="abs" style="left:379px;top:6px" width="12" height="12" viewBox="0 0 12 12"><path d="M0 5C2 1 7 0 9 2l3 1-2 1.500c1 3-1 6-4 7.500 1-2 0-4-1.500-5C3 7 1 6.500 0 5z" fill="#3a86d8"/></svg>
  <svg class="abs" style="left:407px;top:6px" width="12" height="12" viewBox="0 0 12 12"><rect width="12" height="12" fill="#2b2b2b"/><path d="M1 0h7v7H1z" fill="#f4d63b"/><path d="M6 6h5v5H6z" fill="#3b3b3b"/><path d="M5 9l5-5" stroke="#4a8ad0" stroke-width="1"/></svg>
  <svg class="abs" style="left:435px;top:6px" width="12" height="12" viewBox="0 0 12 12"><rect width="9" height="9" rx="1" fill="#e8432d"/><rect x="5" y="5" width="7" height="7" rx="1" fill="#5c8fe8"/><path d="M2 2.500h5v1H2zM2 4.500h3v1H2z" fill="#fff"/></svg>
  <svg class="abs" style="left:463px;top:6px" width="12" height="12" viewBox="0 0 12 12"><rect width="10" height="10" rx="1" fill="#e8432d"/><rect x="6" y="6" width="6" height="6" rx="1" fill="#f59a55"/><path d="M2 3h5v1H2zM2 5h3v1H2z" fill="#fff"/></svg>
  <span class="abs" style="left:61px;top:23px;width:22px;height:1px;background:#9cc4e4"></span><span class="abs" style="left:89px;top:23px;width:22px;height:1px;background:#9cc4e4"></span><span class="abs" style="left:115px;top:23px;width:26px;height:1px;background:#9cc4e4"></span><span class="abs" style="left:203px;top:23px;width:22px;height:1px;background:#9cc4e4"></span><span class="abs" style="left:231px;top:23px;width:22px;height:1px;background:#9cc4e4"></span><span class="abs" style="left:345px;top:23px;width:21px;height:1px;background:#9cc4e4"></span><span class="abs" style="left:373px;top:23px;width:21px;height:1px;background:#9cc4e4"></span><span class="abs" style="left:402px;top:23px;width:21px;height:1px;background:#9cc4e4"></span><span class="abs" style="left:430px;top:23px;width:22px;height:1px;background:#9cc4e4"></span><span class="abs" style="left:459px;top:23px;width:21px;height:1px;background:#9cc4e4"></span>
  <svg class="abs" style="left:1401px;top:7px" width="12" height="11" viewBox="0 0 12 11"><path d="M1 9c1.500-2 3-5.500 4.500-7.500 1-1 2 0 1.500 1.500L5 8c1-.5 2.500-1.500 3.500-1.500s1.500 1 .5 2M9 2l2 2" stroke="#fff" stroke-width="1" fill="none"/></svg>
  <span class="abs" style="left:1427px;top:7px;color:#fff;font-size:8.700px;white-space:nowrap">9:38 a. m.</span>
</div>
</body>
</html>
